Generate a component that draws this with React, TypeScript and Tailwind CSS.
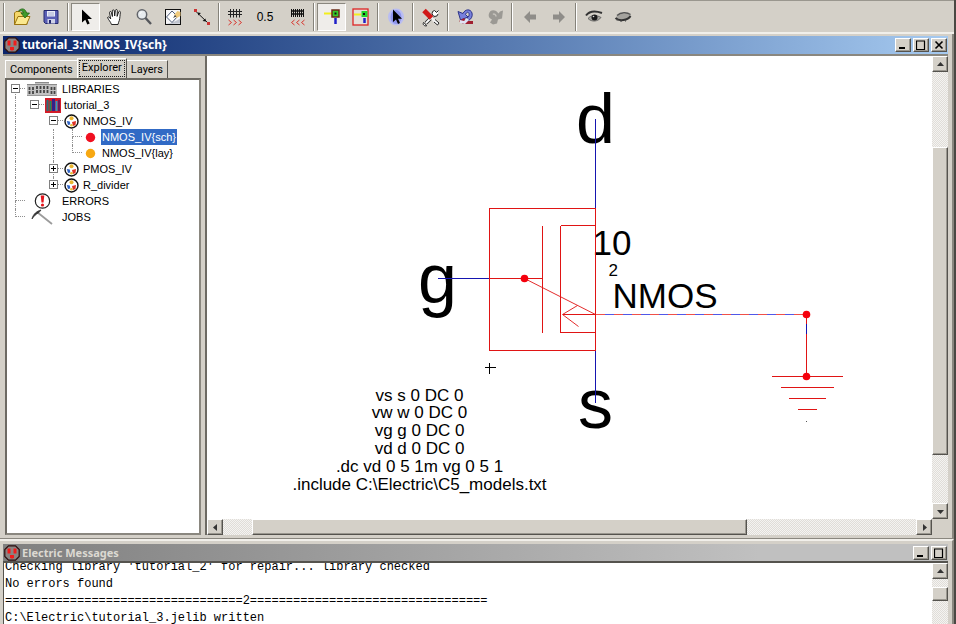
import type { ReactNode } from "react";

const raised =
  "border border-t-white border-l-white border-r-[#55534e] border-b-[#55534e] bg-[#d4d0c8] shadow-[inset_-1px_-1px_0_#9a978f]";
const dither =
  "bg-[repeating-conic-gradient(#e0ddd8_0_25%,#f4f3f1_0_50%)] bg-[length:2px_2px]";

function Icon({ children, w = 20, h = 20 }: { children: ReactNode; w?: number; h?: number }) {
  return (
    <svg width={w} height={h} viewBox={`0 0 ${w} ${h}`} className="block shrink-0" aria-hidden="true">
      {children}
    </svg>
  );
}

function Tool({
  label,
  children,
  active = false,
  size = "w-[29px]",
}: {
  label: string;
  children: ReactNode;
  active?: boolean;
  size?: string;
}) {
  return (
    <button
      type="button"
      aria-label={label}
      aria-pressed={active}
      className={`${size} flex h-7 shrink-0 items-center justify-center ${
        active
          ? "border border-t-[#8a877f] border-l-[#8a877f] border-r-white border-b-white bg-[#efedea]"
          : ""
      }`}
    >
      {children}
    </button>
  );
}

function Sep() {
  return (
    <div className="flex h-7 w-1.5 shrink-0 justify-center">
      <div className="w-0.5 border-l border-r border-l-[#85827a] border-r-white" />
    </div>
  );
}

function Toolbar() {
  return (
    <div
      role="toolbar"
      className="flex h-[34px] items-center border-t border-b-2 border-t-[#9a978f] border-b-[#f1efea] pl-px"
    >
      <Sep />
      <Tool label="Open library">
        <Icon>
          <path d="M2.5 17.5V6l1.500-1.500h4L9.500 6H15v11.500z" fill="#f5d76a" stroke="#9a7410" />
          <path d="M2.500 17.500 6 9.500h12l-3.500 8z" fill="#fbe88e" stroke="#9a7410" />
          <path d="M6.500 4C9.500 0.500 13.500 1.500 14.500 6h3l-4.500 5-4-5h2.500C11 3.500 9 3.500 6.500 4z" fill="#3f9b2c" stroke="#1f6315" strokeWidth=".8" />
        </Icon>
      </Tool>
      <Tool label="Save library">
        <Icon>
          <path d="M3 3.500h14v13H4.500L3 15z" fill="#5a5fb4" stroke="#24286e" />
          <rect x="6" y="4" width="8" height="5.500" fill="#e9ecf7" />
          <path d="M7 6h6M7 8h6" stroke="#a5abcf" />
          <rect x="6.500" y="12" width="7.500" height="4.500" fill="#cfd2e8" />
          <rect x="8" y="13" width="2" height="3.500" fill="#24286e" />
        </Icon>
      </Tool>
      <Sep />
      <Tool label="Select" active>
        <Icon>
          <path d="M6 2.500v13l3.300-2.800 2 4.800 2.400-1-2.100-4.500h4.400z" fill="#000" />
        </Icon>
      </Tool>
      <Tool label="Pan">
        <Icon>
          <path
            d="M6.500 17.500c-1-3-3-4.500-4-7 .8-1.200 2-.5 3.200 1.500L4.500 5.500c.2-1.300 1.500-1.300 1.900 0l1 4L7.300 3.800c.3-1.300 1.700-1.300 2 0l.4 5.200.7-5.700c.4-1.200 1.800-1 1.900.2l-.2 5.900 1.600-4.600c.6-1 1.900-.6 1.700.6-.4 2.200-.4 5.600-1.100 8.100-.4 1.400-1.100 2.300-1.300 4z"
            fill="#fff"
            stroke="#111"
            strokeWidth=".9"
          />
        </Icon>
      </Tool>
      <Tool label="Zoom">
        <Icon>
          <circle cx="8" cy="7.500" r="4.700" fill="#e7ebee" stroke="#62656b" strokeWidth="1.500" />
          <path d="M6 7c.2-1.300 1-2 2.200-2" stroke="#fff" fill="none" />
          <path d="m11.500 11 5.500 6" stroke="#55575c" strokeWidth="2.400" />
        </Icon>
      </Tool>
      <Tool label="Outline edit">
        <Icon>
          <rect x="2.500" y="2.500" width="15" height="15" fill="#f6f6f8" stroke="#111" />
          <path d="m3 17 14-.500v-5c-4 3-9 4.500-14 5.500z" fill="#8a92a3" opacity=".5" />
          <path d="m9 4 5.500 5.500L9 15.500 3.500 10z" fill="#fff" stroke="#4d5b78" />
          <path d="m11 8 3.500-4 3 1v4l-4 2z" fill="#efc97c" />
          <path d="m10 11 2-3 1.500 1.500z" fill="#444" />
        </Icon>
      </Tool>
      <Tool label="Measure">
        <Icon>
          <path d="M4 4.500 16 16" stroke="#111" />
          <path d="M6 5.500v3l3-2.500zM14 14.500l-3.500-.500 3-2.500z" fill="#111" />
          <rect x="2" y="2" width="3" height="3" fill="#c33" />
          <rect x="15" y="15" width="3" height="3" fill="#c33" />
        </Icon>
      </Tool>
      <Sep />
      <Tool label="Larger grid" size="w-[26px]">
        <Icon>
          <path d="M5.500 2v8.500M8.500 2v8.500M11.500 2v8.500M14.500 2v8.500M3 4.500h14M3 7.500h14" stroke="#222" />
          <path d="m3.500 13 3 2.500-3 2.500M8.500 13l3 2.500-3 2.500M13.500 13l3 2.500-3 2.500" stroke="#d9362e" fill="none" />
        </Icon>
      </Tool>
      <Tool label="Grid alignment 0.5" size="w-[34px]">
        <span className="text-xs">0.5</span>
      </Tool>
      <Tool label="Smaller grid">
        <Icon>
          <path d="M4.500 2v8M6.500 2v8M8.500 2v8M10.500 2v8M12.500 2v8M14.500 2v8M16.500 2v8" stroke="#111" />
          <path d="M4 4h13M4 7h13" stroke="#111" strokeWidth="1.500" />
          <path d="m7.500 13-3 2.500 3 2.500M12.500 13l-3 2.500 3 2.500M17.500 13l-3 2.500 3 2.500" stroke="#d9362e" fill="none" />
        </Icon>
      </Tool>
      <Sep />
      <Tool label="Select objects" active>
        <Icon>
          <path d="M2 6.500h10" stroke="#f2ee1c" strokeWidth="2" />
          <path d="M13.500 11v6" stroke="#2020c8" strokeWidth="2.500" />
          <rect x="10" y="3" width="7" height="7" fill="#35cc2a" stroke="#6b2b18" strokeWidth="1.500" />
          <rect x="12.500" y="5.500" width="2" height="2" fill="#111" />
        </Icon>
      </Tool>
      <Tool label="Select area">
        <Icon>
          <rect x="2" y="2" width="15" height="16" fill="#e4e0da" stroke="#dd2525" strokeWidth="1.300" />
          <path d="M3 7.500h7" stroke="#f2ee1c" strokeWidth="2" />
          <rect x="10.500" y="4" width="6" height="6" fill="#22d52a" />
          <rect x="12" y="6" width="2" height="2" fill="#111" />
          <path d="M13.500 11v5" stroke="#2020c8" strokeWidth="2.500" />
        </Icon>
      </Tool>
      <Sep />
      <Tool label="Select special">
        <Icon>
          <ellipse cx="10" cy="10" rx="8" ry="8.500" fill="#b9bdf2" />
          <ellipse cx="10" cy="10" rx="5.500" ry="7" fill="#8f95ee" />
          <path d="M7 2.500v12.500l3-2.600 2 4.600 2-1-2-4.300h4z" fill="#000" />
        </Icon>
      </Tool>
      <Sep />
      <Tool label="Preferences">
        <Icon>
          <path d="M16 5 5 16" stroke="#222" strokeWidth="3.500" />
          <path d="M16 5 5 16" stroke="#fff" strokeWidth="1.800" />
          <path d="M17.500 3.500 15.500 5.500 13.500 3.500a3 3 0 1 0 3.500 3.500M2.500 15.500l2 1.500 1 2c-2.500 0-4-1.500-3-3.500z" fill="#fff" stroke="#222" />
          <path d="m3 3.500 7.500 7.500" stroke="#d01818" strokeWidth="5" />
          <path d="m11 11 5 5.500" stroke="#eee" strokeWidth="3" />
          <path d="m13 15 3.500 3 1.500-2-4-3.500" fill="#fff" stroke="#222" />
        </Icon>
      </Tool>
      <Sep />
      <Tool label="Undo">
        <Icon>
          <path d="M7 6.500C9 2 14.500 1.500 16 6c.8 3-.5 6-3.500 7.500L11 11c2-1 2.500-3 2-4.500-.8-2-2.500-1.500-3.500 1L12 10l-7.500 3L2 4.500z" fill="#7880dc" stroke="#2d3488" />
          <path d="m3 14 5-3 2 3H17v3H7z" fill="#a01f30" />
          <path d="m4 13 4 1 3-3 2 2-4 4-5-1z" fill="#dfe2f5" />
        </Icon>
      </Tool>
      <Tool label="Redo">
        <Icon>
          <path d="M13.500 6.500C11 2 5 2 4 6.500c-1 3 .5 5 3 6l-2 3 3 2 4-1 1-4 4-1 1-8-3 1z" fill="#9b9994" />
          <path d="M8 7.500c1-1 3 0 3 2" stroke="#c7c4bd" strokeWidth="1.500" fill="none" />
        </Icon>
      </Tool>
      <Sep />
      <Tool label="Back">
        <Icon>
          <path d="M4 10 10 4V7.500h6v5h-6V16z" fill="#8f8d89" />
        </Icon>
      </Tool>
      <Tool label="Forward">
        <Icon>
          <path d="m16 10-6-6V7.500H4v5h6V16z" fill="#8f8d89" />
        </Icon>
      </Tool>
      <Sep />
      <Tool label="Expand">
        <Icon>
          <path d="M2 8.500c3-4 9-5 16-2.500" stroke="#333" strokeWidth="2" fill="none" />
          <path d="M4 11.500c3-3.500 8-4 13-1-3 4-9 5-13 1z" fill="#a9a7a2" stroke="#555" strokeWidth=".8" />
          <circle cx="10.500" cy="10.500" r="3" fill="#1a1a1a" />
          <circle cx="9.500" cy="9.500" r=".8" fill="#ddd" />
        </Icon>
      </Tool>
      <Tool label="Unexpand">
        <Icon>
          <path d="M3 10C6 6.500 13 5 18 8c-1 6-12 7-15 2z" fill="#a5a39e" />
          <path d="M2.500 11C6 14.500 15 13.500 17.500 9" stroke="#333" strokeWidth="2" fill="none" />
          <path d="M4 8.500C8 5 14 5 17.500 7.500" stroke="#555" strokeWidth="1.500" fill="none" />
          <path d="m5 12-1 1.500m4-.500v2m4-2 .500 1.500" stroke="#444" />
        </Icon>
      </Tool>
    </div>
  );
}

function AppLogo() {
  return (
    <Icon w={16} h={16}>
      <path d="M4.500.8h7l3.700 3.700v7l-3.700 3.700h-7L.8 11.500v-7z" fill="#8b8482" stroke="#2b0d0d" strokeWidth="1.200" />
      <rect x="3.500" y="3.500" width="3" height="5" fill="#f01c1c" />
      <rect x="9.500" y="3.500" width="3" height="5" fill="#f01c1c" />
      <path d="M6 10h4v2.500l-1 1H7l-1-1z" fill="#f01c1c" />
    </Icon>
  );
}

function WindowButton({ kind }: { kind: "Minimize" | "Maximize" | "Close" }) {
  return (
    <button type="button" aria-label={kind} className={`flex h-3.5 w-4 items-center justify-center ${raised}`}>
      <Icon w={10} h={10}>
        {kind === "Minimize" && <path d="M1 8h6" stroke="#000" strokeWidth="2" />}
        {kind === "Maximize" && (
          <path d="M.5 1v8.500h8V1M0 1h9" fill="none" stroke="#000" strokeWidth="1.200" />
        )}
        {kind === "Close" && <path d="m1.500 1.500 7 7m0-7-7 7" stroke="#000" strokeWidth="1.600" />}
      </Icon>
    </button>
  );
}

function Arrow({ dir }: { dir: "up" | "down" | "left" | "right" }) {
  const shapes = {
    up: "M0 5 3.500 1 7 5z",
    down: "M0 2 3.500 6 7 2z",
    left: "M5 0 1 3.500 5 7z",
    right: "M2 0 6 3.500 2 7z",
  };
  return (
    <button
      type="button"
      aria-label={`Scroll ${dir}`}
      className={`flex size-4 shrink-0 items-center justify-center ${raised}`}
    >
      <Icon w={7} h={7}>
        <path d={shapes[dir]} fill="#333" />
      </Icon>
    </button>
  );
}

type Guide = "line" | "blank" | "tee" | "end" | "open" | "shut" | "lastShut" | "root";

function GuideCell({ kind }: { kind: Guide }) {
  const dots = "border-dotted border-[#8f8f8f]";
  const boxed = kind === "open" || kind === "shut" || kind === "lastShut" || kind === "root";
  const above = kind === "line" || kind === "tee" || kind === "end" || kind === "shut" || kind === "lastShut";
  const below = kind === "line" || kind === "tee" || kind === "shut" || kind === "root";
  return (
    <span className="relative block h-4 w-[19px] shrink-0 pl-[9px]">
      <span
        className={`block h-2 ${dots} ${above ? "border-l" : ""} ${
          kind === "line" || kind === "blank" ? "" : "border-b"
        }`}
      />
      <span className={`block h-2 ${dots} ${below ? "border-l" : ""}`} />
      {boxed && (
        <svg width="9" height="9" className="absolute top-[3px] left-[5px]" shapeRendering="crispEdges" aria-hidden="true">
          <rect x=".5" y=".5" width="8" height="8" fill="#fff" stroke="#808080" />
          <path d={kind === "shut" || kind === "lastShut" ? "M2 4.500h5M4.500 2v5" : "M2 4.500h5"} stroke="#000" />
        </svg>
      )}
    </span>
  );
}

function CellIcon() {
  return (
    <Icon w={15} h={15}>
      <circle cx="7.500" cy="7.500" r="6.500" fill="#fff" stroke="#111" strokeWidth="1.400" />
      <circle cx="7.500" cy="4.300" r="2" fill="#eab52e" />
      <path d="m2.800 7 3 .5.500 3-2.300.5z" fill="#2f63c4" />
      <path d="m8 8 4-1-.500 4-2.500 1z" fill="#dd3226" />
      <circle cx="7.500" cy="11.300" r="1.300" fill="#e8c13a" />
    </Icon>
  );
}

const dot = (fill: string) => (
  <Icon w={11} h={11}>
    <circle cx="5.500" cy="5.500" r="4.700" fill={fill} />
  </Icon>
);

const rows: { guides: Guide[]; label: string; icon: ReactNode; wide?: boolean; selected?: boolean }[] = [
  {
    guides: ["root"],
    label: "LIBRARIES",
    wide: true,
    icon: (
      <Icon w={30} h={16}>
        <path d="M0 3h8V1h14v2h8v12H0z" fill="#c2c2c2" />
        <path d="M0 3.500h30M8 1.500h14" stroke="#8a8a8a" />
        <path d="M2.500 6v7M6 6v7M10 5v8M13.500 5v8M17 5v8M20.500 5v8M24.500 6v7M27.500 6v7" stroke="#444" strokeWidth="1.800" strokeDasharray="3 1" />
        <path d="M0 14.500h30" stroke="#999" />
      </Icon>
    ),
  },
  {
    guides: ["line", "open"],
    label: "tutorial_3",
    icon: (
      <Icon w={16} h={15}>
        <rect width="16" height="15" fill="#d31c28" />
        <path d="M2.500 2v11" stroke="#2a6f7a" strokeWidth="2" />
        <path d="M5.500 3v10" stroke="#168a5e" strokeWidth="2" />
        <path d="M8.500 1v12" stroke="#33208c" strokeWidth="3" />
        <path d="M11.500 3v10" stroke="#2d9bc4" strokeWidth="2" />
        <path d="M14 2v11" stroke="#4b1a6d" strokeWidth="1.500" />
      </Icon>
    ),
  },
  { guides: ["line", "blank", "open"], label: "NMOS_IV", icon: <CellIcon /> },
  { guides: ["line", "blank", "line", "tee"], label: "NMOS_IV{sch}", icon: dot("#f01020"), selected: true },
  { guides: ["line", "blank", "line", "end"], label: "NMOS_IV{lay}", icon: dot("#f7a812") },
  { guides: ["line", "blank", "shut"], label: "PMOS_IV", icon: <CellIcon /> },
  { guides: ["line", "blank", "lastShut"], label: "R_divider", icon: <CellIcon /> },
  {
    guides: ["tee"],
    label: "ERRORS",
    wide: true,
    icon: (
      <Icon w={17} h={16}>
        <circle cx="8.500" cy="8" r="7.200" fill="#fff" stroke="#222" strokeWidth="1.200" />
        <path d="M6.700 2.500h3.600L9.500 9.500h-2z" fill="#e3151d" />
        <circle cx="8.500" cy="12" r="1.600" fill="#e3151d" />
      </Icon>
    ),
  },
  {
    guides: ["end"],
    label: "JOBS",
    wide: true,
    icon: (
      <Icon w={22} h={16}>
        <path d="m6 3 15 12" stroke="#9b9b9b" strokeWidth="1.800" />
        <path d="M10 1C6 2 2 5 1 10c2-3 4-5 7-6.500z" fill="#333" stroke="#333" strokeWidth=".8" />
      </Icon>
    ),
  },
];

function Explorer() {
  return (
    <aside className="flex w-[198px] shrink-0 flex-col pt-0.5 pl-0.5">
      <div role="tablist" className="flex h-5 items-end font-[Roboto,sans-serif] text-[11px] leading-4">
        <button type="button" role="tab" className="h-[18px] border-t border-l border-white px-1">
          Components
        </button>
        <button
          type="button"
          role="tab"
          aria-selected="true"
          className="h-5 border border-t-white border-l-white border-r-[#55534e] border-b-0 p-px"
        >
          <span className="block h-[17px] border border-dotted border-[#222] px-0.5 leading-[14px]">Explorer</span>
        </button>
        <button
          type="button"
          role="tab"
          className="h-[18px] border-t border-r border-t-white border-r-[#55534e] px-1"
        >
          Layers
        </button>
      </div>
      <div className="flex-1 border-2 border-t-[#6d6a63] border-l-[#6d6a63] border-r-[#8a877f] border-b-[#8a877f] bg-white">
        <ul role="tree" className="-ml-px pt-px text-[11px] leading-4">
          {rows.map((row) => (
            <li key={row.label} role="treeitem" aria-selected={!!row.selected} className="flex h-4 items-center">
              {row.guides.map((g, i) => (
                <GuideCell key={i} kind={g} />
              ))}
              <span
                className={`flex shrink-0 items-center justify-center pr-0.5 ${row.wide ? "w-9" : "w-[19px]"}`}
              >
                {row.icon}
              </span>
              <span className={`px-px ${row.selected ? "bg-[#316ac5] text-white" : ""}`}>{row.label}</span>
            </li>
          ))}
        </ul>
      </div>
    </aside>
  );
}

const spice = [
  { y: 33, text: "vs s 0 DC 0" },
  { y: 50, text: "vw w 0 DC 0" },
  { y: 68, text: "vg g 0 DC 0" },
  { y: 86, text: "vd d 0 DC 0" },
  { y: 104, text: ".dc vd 0 5 1m vg 0 5 1" },
  { y: 122, text: ".include C:\\Electric\\C5_models.txt" },
];

function Schematic() {
  return (
    <svg className="block min-h-0 w-full flex-1 bg-white" role="img" aria-label="NMOS schematic">
      {/* the cell centre cross is the origin of the drawing */}
      <g transform="translate(282.5 311.5)" fill="#000">
        <g fontSize="70" textAnchor="middle">
          <text x="106" y="-225">d</text>
          <text x="-52" y="-65">g</text>
          <text x="106" y="60">s</text>
        </g>
        <g fontSize="35">
          <text x="103" y="-113">10</text>
          <text x="123" y="-60">NMOS</text>
        </g>
        <text x="119" y="-92" fontSize="17">2</text>
        <g fontSize="17" textAnchor="middle">
          {spice.map((l) => (
            <text key={l.y} x="-70" y={l.y}>
              {l.text}
            </text>
          ))}
        </g>
        <g fill="none" shapeRendering="crispEdges">
          <path d="M-5 0H6M0-5V6" stroke="#000" />
          <g stroke="#1515b0">
            <path d="M106-249V-159M106-17V35M-52-89H0" />
            <path d="M106-53H317" stroke="#5058e8" />
          </g>
          <g stroke="#e01414">
            <path d="M0-159H106V-17H0z" />
            <path d="M53-142V-35M0-89H53M71-142H106M71-142V-35H106" />
            <path d="M73-53H106M317-53V9" />
            <path d="M106-53H317" strokeDasharray="9 9" stroke="#f05048" />
            <path d="M282 9H353M291 20H344M299 31H336M308 42H327" />
          </g>
          <path d="M317-44V-34" stroke="#1515b0" />
          <path d="M317 53V54" stroke="#555" />
        </g>
        <path d="M35-89 106-53M88-62 73-53 89-41" fill="none" stroke="#e01414" strokeWidth=".9" />
        <g fill="#f5000c">
          <circle cx="35" cy="-89" r="3.800" />
          <circle cx="317" cy="-53" r="3.800" />
          <circle cx="317" cy="9" r="3.800" />
        </g>
      </g>
    </svg>
  );
}

const log = [
  "Checking library 'tutorial_2' for repair... library checked",
  "No errors found",
  "=".repeat(33) + "2" + "=".repeat(33),
  "C:\\Electric\\tutorial_3.jelib written",
];

export default function App() {
  return (
    <div className="flex h-screen flex-col overflow-hidden border-r-2 border-[#4a4843] bg-[#d4d0c8] font-['Liberation_Sans',Arial,sans-serif] text-black">
      <Toolbar />
      <section className="flex min-h-0 flex-1 flex-col border-r-2 border-b border-[#8a877f] pt-0.5 pr-1 pb-[3px] pl-[3px]">
        <header className="flex h-[18px] shrink-0 items-center gap-0.5 bg-gradient-to-r from-[#0a246a] to-[#a6caf0] pr-px pl-px">
          <AppLogo />
          <h1 className="flex-1 font-['Noto_Sans',sans-serif] text-xs leading-4 font-bold text-white">
            tutorial_3:NMOS_IV{"{sch}"}
          </h1>
          <WindowButton kind="Minimize" />
          <WindowButton kind="Maximize" />
          <WindowButton kind="Close" />
        </header>
        <div className="flex min-h-0 flex-1 border-t-2 border-[#8a877f]">
          <Explorer />
          <div className="ml-1 flex min-w-0 flex-1 border-l-2 border-[#6d6a63]">
            <div className="flex min-w-0 flex-1 flex-col">
              <Schematic />
              <div className={`flex h-4 shrink-0 ${dither}`}>
                <Arrow dir="left" />
                <div className="grow-[29] basis-0" />
                <div className={`grow-[495] basis-0 ${raised}`} />
                <div className="grow-[170] basis-0" />
                <Arrow dir="right" />
              </div>
            </div>
            <div className="flex w-4 shrink-0 flex-col">
              <div className={`flex flex-1 flex-col ${dither}`}>
                <Arrow dir="up" />
                <div className="grow-[75] basis-0" />
                <div className={`grow-[308] basis-0 ${raised}`} />
                <div className="grow-[48] basis-0" />
                <Arrow dir="down" />
              </div>
              <div className="h-4" />
            </div>
          </div>
        </div>
      </section>
      <section className="flex h-[85px] shrink-0 flex-col border-t-2 border-r-2 border-t-[#f1efea] border-r-[#8a877f] pt-[3px] pr-1 pl-[3px]">
        <header className="flex h-[17px] shrink-0 items-center gap-0.5 bg-gradient-to-r from-[#808080] to-[#c0c0c0] to-80% pr-px pl-px">
          <AppLogo />
          <h2 className="flex-1 font-['Noto_Sans',sans-serif] text-[11px] leading-4 font-bold text-[#dcd9d2]">
            Electric Messages
          </h2>
          <WindowButton kind="Minimize" />
          <WindowButton kind="Maximize" />
        </header>
        <div className="flex min-h-0 flex-1 border-t-2 border-l border-[#55534e] bg-white">
          <div className="min-w-0 flex-1 overflow-hidden pl-px font-['Liberation_Mono',monospace] text-xs leading-[17px] whitespace-pre">
            <div className="-mt-1">
              {log.map((line) => (
                <div key={line}>{line}</div>
              ))}
            </div>
          </div>
          <div className={`flex w-4 shrink-0 flex-col ${dither}`}>
            <Arrow dir="up" />
            <div className={`mt-2 h-3.5 ${raised}`} />
          </div>
        </div>
      </section>
    </div>
  );
}
